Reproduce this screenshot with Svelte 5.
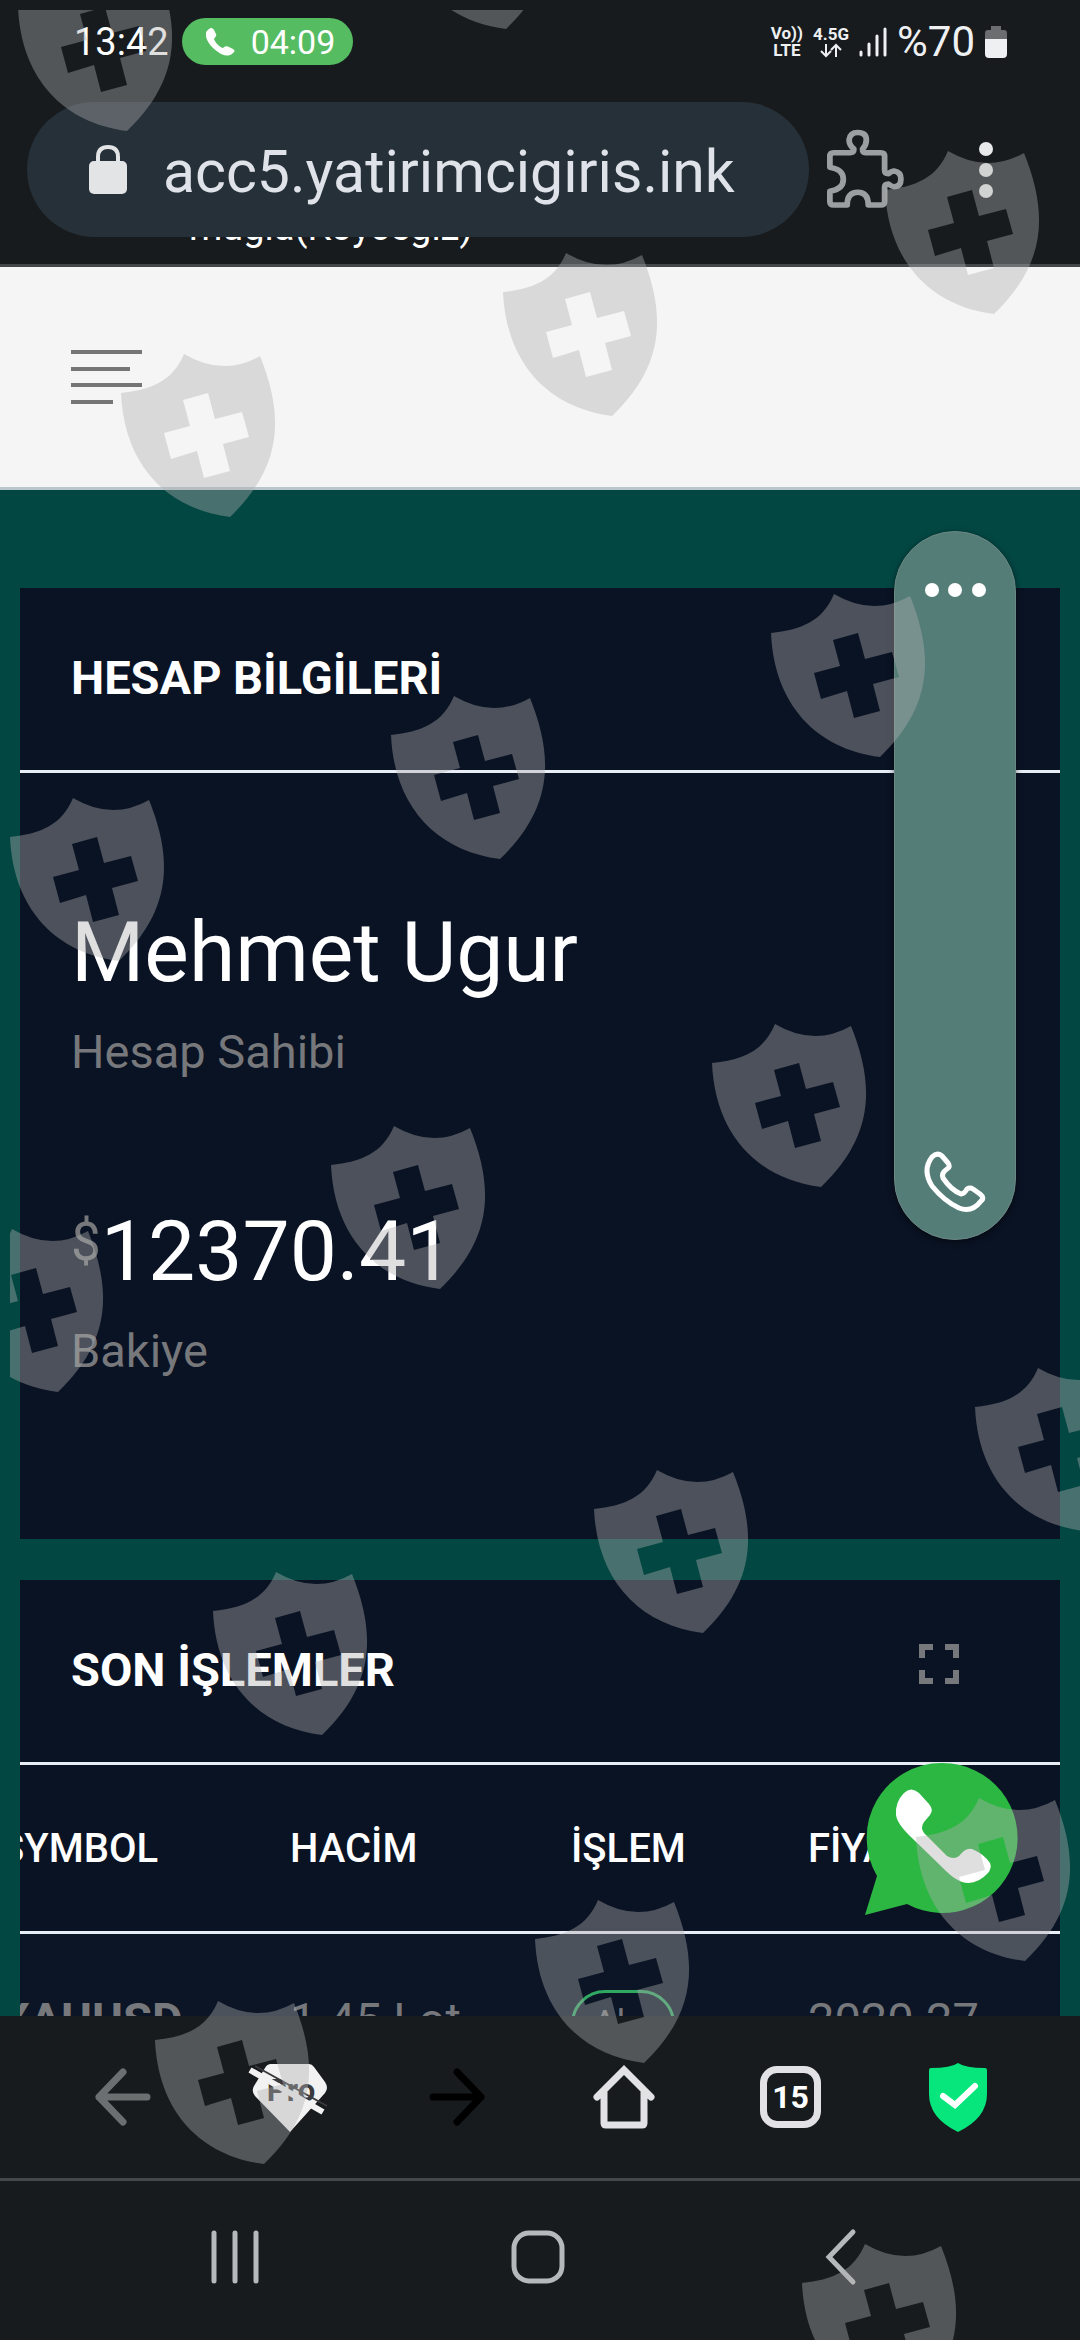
<script lang="ts">
    type Trade = {
        symbol: string;
        volume: string;
        side: string;
        price: string;
    };

    const columns: string[] = ['SYMBOL', 'HACİM', 'İŞLEM', 'FİYAT'];

    const trades: Trade[] = [
        { symbol: 'XAUUSD', volume: '1.45 Lot', side: 'Alış', price: '2020.27' }
    ];

    // watermark shields, scattered over the whole screen
    const shields: [number, number][] = [
        [8, -42],
        [387, -144],
        [875, 141],
        [493, 243],
        [111, 344],
        [761, 584],
        [381, 686],
        [0, 788],
        [702, 1014],
        [321, 1116],
        [-61, 1219],
        [965, 1358],
        [584, 1460],
        [203, 1562],
        [906, 1788],
        [525, 1890],
        [145, 1991],
        [792, 2234]
    ];

    let url: string = 'acc5.yatirimcigiris.ink';
</script>

<div class="screen">
    <header class="browser-top">
        <div class="status-bar">
            <span class="clock">13:42</span>
            <span class="call-chip">
                <svg width="30" height="30" viewBox="0 0 30 30" aria-hidden="true">
                    <path
                        d="M4 2 C6 0 8 1 9 3 L11 7 C12 9 10 10 9 12 C10 15 14 20 18 21 C20 19 22 19 24 20 L28 22 C30 23 30 25 28 26 C24 30 18 29 13 25 C6 20 0 13 1 6 C1 4 3 3 4 2 Z"
                        fill="#fff"
                    />
                </svg>
                04:09
            </span>
            <div class="status-right">
                <span class="network">
                    <span>Vo))</span>
                    <span>LTE</span>
                </span>
                <span class="network">
                    <span>4.5G</span>
                    <svg width="24" height="15" viewBox="0 0 24 15" aria-hidden="true">
                        <path
                            d="M7 1 V12 M2 8 L7 13 L12 8 M17 14 V3 M12 7 L17 2 L22 7"
                            fill="none"
                            stroke="#eef0f2"
                            stroke-width="2"
                        />
                    </svg>
                </span>
                <svg width="28" height="30" viewBox="0 0 28 30" aria-hidden="true">
                    <path
                        d="M2 25 V28 M10 17 V28 M18 9 V28 M26 2 V28"
                        stroke="#eef0f2"
                        stroke-width="3"
                        stroke-linecap="round"
                    />
                </svg>
                <span class="percent">%70</span>
                <svg width="22" height="32" viewBox="0 0 22 32" aria-hidden="true">
                    <path d="M6 0 H16 V4 H19 Q22 4 22 7 V14 H0 V7 Q0 4 3 4 H6 Z" fill="#6b6d6f" />
                    <path d="M0 13 H22 V28 Q22 32 18 32 H4 Q0 32 0 28 Z" fill="#eef0f2" />
                </svg>
            </div>
        </div>

        <div class="address-row">
            <span class="behind">muğla(Köyceğiz)</span>
            <label class="address">
                <svg width="38" height="49" viewBox="0 0 38 49" aria-hidden="true">
                    <rect x="0" y="16" width="38" height="33" rx="5" fill="#e3e4e6" />
                    <path
                        d="M9 18 V12 Q9 2 19 2 Q29 2 29 12 V18"
                        fill="none"
                        stroke="#e3e4e6"
                        stroke-width="4"
                    />
                </svg>
                <input type="text" bind:value={url} aria-label="Adres" />
            </label>
            <button class="extension" aria-label="Uzantılar">
                <svg width="78" height="78" viewBox="0 0 78 78">
                    <path
                        d="M7 17 H24 Q28 17 28 13 Q23 9 23 3 Q24 -5 32 -5 Q41 -5 41 3 Q41 9 37 13 Q37 17 40 17 H56 Q60 17 60 21 V36 Q60 40 64 40 Q67 37 70 37 Q77 38 77 46 Q77 54 70 54 Q67 54 64 51 Q60 51 60 55 V70 Q60 74 56 74 H43 Q43 60 32 60 Q21 60 21 74 H7 Q3 74 3 70 V59 Q17 57 17 46 Q17 35 3 33 V21 Q3 17 7 17 Z"
                        transform="translate(0 6) scale(0.96 0.92)"
                        fill="none"
                        stroke="#9c9fa1"
                        stroke-width="6"
                        stroke-linejoin="round"
                    />
                </svg>
            </button>
            <button aria-label="Menü">
                <svg width="16" height="56" viewBox="0 0 16 56">
                    <circle cx="8" cy="7" r="7" fill="#e8e9ea" />
                    <circle cx="8" cy="28" r="7" fill="#e8e9ea" />
                    <circle cx="8" cy="49" r="7" fill="#e8e9ea" />
                </svg>
            </button>
        </div>
    </header>

    <main>
        <div class="site-header">
            <button aria-label="Menüyü aç">
                <svg width="72" height="54" viewBox="0 0 72 54">
                    <path
                        d="M0 2 H71 M0 19 H59 M0 35 H71 M0 52 H42"
                        stroke="#757575"
                        stroke-width="4"
                    />
                </svg>
            </button>
        </div>

        <div class="content">
            <section class="card">
                <h2>HESAP BİLGİLERİ</h2>
                <div class="account">
                    <div class="figure">
                        <p class="value">Mehmet Ugur</p>
                        <p class="caption">Hesap Sahibi</p>
                    </div>
                    <div class="figure">
                        <p class="value"><span class="currency">$</span>12370.41</p>
                        <p class="caption">Bakiye</p>
                    </div>
                </div>
            </section>

            <section class="card">
                <h2>
                    SON İŞLEMLER
                    <button class="expand" aria-label="Tam ekran">
                        <svg width="40" height="40" viewBox="0 0 40 40">
                            <path
                                d="M14 3 H3 V14 M26 3 H37 V14 M14 37 H3 V26 M26 37 H37 V26"
                                fill="none"
                                stroke="#77787b"
                                stroke-width="6"
                            />
                        </svg>
                    </button>
                </h2>
                <div class="table-wrap">
                    <table>
                        <thead>
                            <tr>
                                {#each columns as column}
                                    <th>{column}</th>
                                {/each}
                            </tr>
                        </thead>
                        <tbody>
                            {#each trades as trade}
                                <tr>
                                    <td class="symbol">{trade.symbol}</td>
                                    <td>{trade.volume}</td>
                                    <td><span class="badge">{trade.side}</span></td>
                                    <td>{trade.price}</td>
                                </tr>
                            {/each}
                        </tbody>
                    </table>
                </div>
            </section>
        </div>

        <a class="whatsapp" href="#whatsapp" aria-label="WhatsApp">
            <svg width="154" height="154" viewBox="0 0 154 154">
                <path
                    d="M78 1 A75 75 0 1 1 43 142 L1 153 L13 114 A75 75 0 0 1 78 1 Z"
                    fill="#2cb742"
                />
                <path
                    d="M40 31 Q47 24 55 31 L65 42 Q70 48 66 53 L60 60 Q56 66 60 71 L83 94 Q90 98 95 94 Q102 85 108 87 Q120 92 126 101 Q128 106 124 111 Q112 124 98 120 Q90 117 82 109 L48 76 Q33 62 32 53 Q31 40 40 31 Z"
                    fill="#fff"
                />
            </svg>
        </a>
    </main>

    <aside class="call-panel">
        <button aria-label="Seçenekler">
            <svg width="62" height="16" viewBox="0 0 62 16">
                <circle cx="8" cy="8" r="7" fill="#fff" />
                <circle cx="31" cy="8" r="7" fill="#fff" />
                <circle cx="55" cy="8" r="7" fill="#fff" />
            </svg>
        </button>
        <button aria-label="Arama">
            <svg width="62" height="62" viewBox="0 0 62 62">
                <path
                    d="M8 6 Q13 1 18 5 L24 12 Q27 16 23 18 Q17 22 19 27 Q27 39 37 43 Q40 43 43 38 Q46 36 49 38 L56 43 Q61 47 57 50 Q48 62 35 57 Q20 50 8 35 Q-2 19 8 6 Z"
                    fill="none"
                    stroke="#fff"
                    stroke-width="5"
                    stroke-linejoin="round"
                />
            </svg>
        </button>
    </aside>

    <nav class="toolbar">
        <button aria-label="Geri">
            <svg width="56" height="58" viewBox="0 0 56 58">
                <path
                    d="M52 29 H4 M28 4 L4 29 L28 54"
                    fill="none"
                    stroke="#6c6f70"
                    stroke-width="7"
                    stroke-linecap="round"
                    stroke-linejoin="round"
                />
            </svg>
        </button>
        <button aria-label="Pro">
            <svg width="78" height="70" viewBox="0 0 78 70">
                <path d="M20 2 H58 Q61 2 63 5 L74 20 Q78 26 74 31 L39 70 L4 34 Q0 29 3 24 L14 6 Q16 2 20 2 Z" fill="#f2f2f3" />
                <text x="40" y="39" text-anchor="middle" font-size="31" font-weight="700" fill="#3a3a3c">Pro</text>
                <path d="M4 4 L76 44" stroke="#3a3a3c" stroke-width="2" />
                <path d="M-1 8 L72 50" stroke="#f2f2f3" stroke-width="6" />
            </svg>
        </button>
        <button aria-label="İleri">
            <svg width="56" height="58" viewBox="0 0 56 58">
                <path
                    d="M4 29 H52 M28 4 L52 29 L28 54"
                    fill="none"
                    stroke="#000"
                    stroke-width="7"
                    stroke-linecap="round"
                    stroke-linejoin="round"
                />
            </svg>
        </button>
        <button aria-label="Ana sayfa">
            <svg width="62" height="64" viewBox="0 0 62 64">
                <path
                    d="M4 32 L31 5 L58 32 M11 27 V58 Q11 60 13 60 H49 Q51 60 51 58 V27"
                    fill="none"
                    stroke="#e2e2e5"
                    stroke-width="7"
                    stroke-linecap="round"
                />
            </svg>
        </button>
        <button class="tabs" aria-label="Sekmeler">15</button>
        <button aria-label="Koruma">
            <svg width="58" height="70" viewBox="0 0 58 70">
                <path
                    d="M29 1 Q36 6 56 6 Q58 6 58 8 V32 Q58 56 29 70 Q0 56 0 32 V8 Q0 6 2 6 Q22 6 29 1 Z"
                    fill="#07e67c"
                />
                <path
                    d="M14 34 L26 43 L46 24"
                    fill="none"
                    stroke="#fff"
                    stroke-width="6"
                    stroke-linecap="round"
                />
            </svg>
        </button>
    </nav>

    <nav class="system-nav">
        <button aria-label="Son uygulamalar">
            <svg width="48" height="54" viewBox="0 0 48 54">
                <path
                    d="M3 3 V51 M24 3 V51 M45 3 V51"
                    stroke="#b6b9bb"
                    stroke-width="5"
                    stroke-linecap="round"
                />
            </svg>
        </button>
        <button aria-label="Giriş ekranı">
            <svg width="54" height="54" viewBox="0 0 54 54">
                <rect x="3" y="3" width="48" height="48" rx="15" fill="none" stroke="#b6b9bb" stroke-width="5" />
            </svg>
        </button>
        <button aria-label="Önceki">
            <svg width="32" height="56" viewBox="0 0 32 56">
                <path
                    d="M28 3 L4 28 L28 53"
                    fill="none"
                    stroke="#b6b9bb"
                    stroke-width="5"
                    stroke-linecap="round"
                />
            </svg>
        </button>
    </nav>

    <svg class="watermark" aria-hidden="true">
        {#each shields as [x, y]}
            <path
                transform="translate({x} {y})"
                fill-rule="evenodd"
                d="M0 39 C30 36 52 27 63 0 Q102 23 139 2 C163 62 162 112 109 163 C45 155 3 110 0 39 Z M62 46 L87 39 L94 65 L121 58 L128 83 L102 90 L109 117 L83 124 L76 97 L50 105 L43 79 L69 72 Z"
            />
        {/each}
    </svg>
</div>

<style>
    :global(body) {
        margin: 0;
        background: #171b1e;
    }

    .screen {
        position: relative;
        display: flex;
        flex-direction: column;
        height: 100vh;
        overflow: hidden;
        font-family: Roboto, 'Liberation Sans', sans-serif;
        color: #fff;
        background: #171b1e;
    }

    button {
        display: flex;
        align-items: center;
        justify-content: center;
        padding: 0;
        border: 0;
        background: none;
        font-family: inherit;
        color: inherit;
        cursor: pointer;
    }

    svg {
        display: block;
        flex: none;
        overflow: visible;
    }

    .browser-top {
        border-bottom: 3px solid #444749;
    }

    .status-bar {
        display: flex;
        align-items: center;
        height: 83px;
        padding: 0 73px 0 74px;
    }

    .clock {
        font-size: 38px;
    }

    .call-chip {
        display: flex;
        align-items: center;
        gap: 16px;
        height: 47px;
        margin-left: 13px;
        padding: 0 18px 0 23px;
        border-radius: 24px;
        background: #55bc61;
        font-size: 34px;
    }

    .status-right {
        display: flex;
        align-items: center;
        gap: 10px;
        margin-left: auto;
        color: #eef0f2;
    }

    .network {
        display: flex;
        flex-direction: column;
        align-items: center;
        font-size: 17px;
        font-weight: 700;
        line-height: 17px;
    }

    .percent {
        font-size: 42px;
    }

    .address-row {
        position: relative;
        display: flex;
        align-items: center;
        padding: 19px 86px 27px 27px;
    }

    .behind {
        position: absolute;
        bottom: 15px;
        left: 189px;
        font-size: 38px;
        line-height: 44px;
    }

    .address {
        position: relative;
        display: flex;
        align-items: center;
        flex: 1;
        gap: 36px;
        min-width: 0;
        height: 135px;
        padding: 0 62px;
        border-radius: 68px;
        background: #263038;
        box-sizing: border-box;
    }

    .address input {
        flex: 1;
        min-width: 0;
        padding: 4px 0 0;
        border: 0;
        outline: 0;
        background: none;
        font-family: inherit;
        font-size: 59px;
        color: #dfe3e9;
    }

    .extension {
        margin: 0 73px 0 18px;
    }

    main {
        position: relative;
        flex: 1;
        min-height: 0;
        overflow: hidden;
        background: #034743;
    }

    .site-header {
        display: flex;
        align-items: center;
        height: 220px;
        padding: 0 71px;
        border-bottom: 3px solid #b9c6cb;
        background: #f5f5f5;
    }

    .content {
        display: flex;
        flex-direction: column;
        gap: 41px;
        padding: 98px 20px 0;
    }

    .card {
        background: #0a1324;
    }

    h2 {
        display: flex;
        align-items: center;
        justify-content: space-between;
        height: 178px;
        margin: 0;
        padding: 0 101px 4px 51px;
        border-bottom: 3px solid #e9edf5;
        font-size: 47px;
        font-weight: 700;
    }

    .expand {
        padding-bottom: 10px;
    }

    .account {
        display: flex;
        flex-direction: column;
        gap: 122px;
        padding: 130px 51px 160px;
    }

    .figure {
        display: flex;
        flex-direction: column;
        gap: 21px;
    }

    .figure p {
        margin: 0;
    }

    .figure .value {
        font-size: 84px;
        line-height: 100px;
    }

    .figure .caption {
        font-size: 47px;
        line-height: 56px;
        color: #77787b;
    }

    .currency {
        font-size: 53px;
        line-height: 50px;
        vertical-align: 20px;
        color: #77787b;
    }

    .table-wrap {
        overflow: hidden;
    }

    table {
        width: 1200px;
        margin-left: -20px;
        border-collapse: collapse;
        table-layout: fixed;
    }

    th,
    td {
        padding: 0;
        text-align: left;
        white-space: nowrap;
    }

    th {
        height: 166px;
        border-bottom: 3px solid #e9edf5;
        font-size: 40px;
        font-weight: 500;
    }

    th:nth-child(1) {
        width: 290px;
    }

    th:nth-child(2) {
        width: 281px;
    }

    th:nth-child(3) {
        width: 237px;
    }

    td {
        padding: 56px 0;
        background: #0b1526;
        font-size: 47px;
        vertical-align: baseline;
        color: #77787b;
    }

    td.symbol {
        font-weight: 700;
    }

    .badge {
        display: inline-block;
        padding: 10px 19px;
        border: 3px solid #30a862;
        border-radius: 34px;
        font-size: 36px;
        line-height: 42px;
    }

    .whatsapp {
        position: absolute;
        right: 62px;
        bottom: 100px;
    }

    .call-panel {
        position: absolute;
        top: 531px;
        right: 64px;
        display: flex;
        flex-direction: column;
        align-items: center;
        justify-content: space-between;
        width: 122px;
        height: 709px;
        padding: 50px 0 26px;
        border: 1px solid #6b8783;
        border-radius: 61px;
        background: #557d78;
        box-shadow: 0 2px 6px rgba(0, 0, 0, 0.5);
        box-sizing: border-box;
    }

    .toolbar {
        display: flex;
        align-items: center;
        height: 162px;
        padding: 0 39px;
        border-bottom: 3px solid #454849;
    }

    .toolbar button,
    .system-nav button {
        flex: 1;
    }

    .toolbar .tabs {
        flex: none;
        width: 61px;
        height: 62px;
        margin: 0 53px;
        border: 7px solid #e2e2e5;
        border-radius: 17px;
        font-size: 32px;
        font-weight: 700;
        box-sizing: border-box;
    }

    .system-nav {
        display: flex;
        align-items: center;
        height: 151px;
        padding: 0 88px 8px 83px;
    }

    .watermark {
        position: absolute;
        inset: 10px 0 0 10px;
        width: calc(100% - 10px);
        height: calc(100% - 10px);
        overflow: hidden;
        fill: rgba(176, 176, 176, 0.4);
        pointer-events: none;
    }
</style>
